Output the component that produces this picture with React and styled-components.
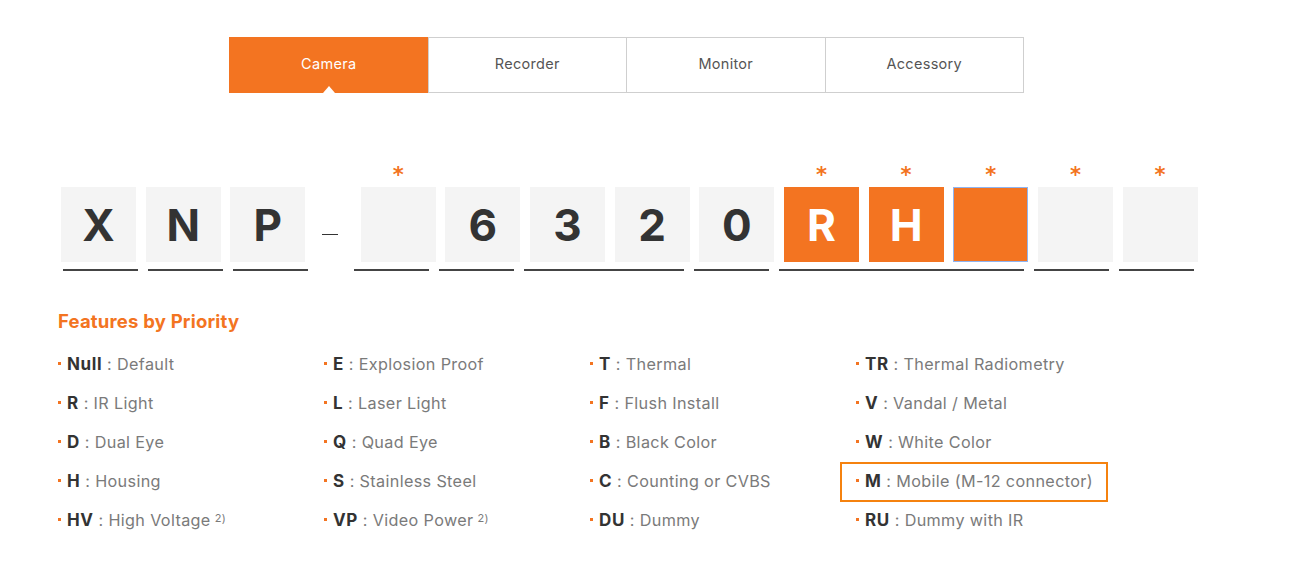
import React from "react";
import styled, { createGlobalStyle } from "styled-components";

const ORANGE = "#f37421";

const Global = createGlobalStyle`
  html, body { margin: 0; padding: 0; background: #fff; }
  body { font-family: Inter, "Noto Sans", sans-serif; color: #333; }
`;

const Page = styled.div`
  width: 1294px;
  height: 571px;
  overflow: hidden;
  padding-top: 37px;
  box-sizing: border-box;
`;

const Tabs = styled.div`
  display: flex;
  margin-left: 229px;
  width: 795px;
  height: 56px;
  box-sizing: border-box;
  border: 1px solid #cfcfcf;
  border-left: none;
`;

const Tab = styled.div`
  position: relative;
  flex: 1;
  display: flex;
  align-items: center;
  justify-content: center;
  padding-bottom: 3px;
  font-size: 14.5px;
  letter-spacing: 0.3px;
  color: ${(p) => (p.$active ? "#fff" : "#555")};
  background: ${(p) => (p.$active ? ORANGE : "#fff")};
  border-left: 1px solid ${(p) => (p.$active ? ORANGE : "#cfcfcf")};
  margin-top: ${(p) => (p.$active ? "-1px" : "0")};
  margin-bottom: ${(p) => (p.$active ? "-1px" : "0")};
  &::after {
    content: "";
    display: ${(p) => (p.$active ? "block" : "none")};
    position: absolute;
    left: 50%;
    bottom: 0;
    transform: translateX(-50%);
    border-left: 6px solid transparent;
    border-right: 6px solid transparent;
    border-bottom: 7px solid #fff;
  }
`;

const CodeRow = styled.div`
  display: flex;
  align-items: flex-end;
  margin-top: 75px;
  margin-left: 61px;
  gap: 9.67px;
`;

const Slot = styled.div`
  display: flex;
  flex-direction: column;
  align-items: center;
`;

const Star = styled.div`
  height: 19px;
  font-size: 21px;
  line-height: 15px;
  color: ${ORANGE};
  font-weight: 700;
  font-family: "DejaVu Sans", sans-serif;
`;

const Box = styled.div`
  width: 75px;
  height: 75px;
  box-sizing: border-box;
  display: flex;
  align-items: center;
  justify-content: center;
  font-size: 44px;
  font-weight: 700;
  color: ${(p) => (p.$on ? "#fff" : "#333")};
  background: ${(p) => (p.$on ? ORANGE : "#f4f4f4")};
  border: ${(p) => (p.$focus ? "1px solid #8fb4f0" : "none")};
`;

const Dash = styled.div`
  width: 16px;
  height: 1px;
  background: #333;
  margin: 0 13px 27px 7px;
`;

const LineRow = styled.div`
  display: flex;
  margin-top: 7px;
  margin-left: 63px;
`;

const Line = styled.div`
  height: 2px;
  background: #444;
  width: ${(p) => p.$w}px;
  margin-right: ${(p) => p.$gap}px;
`;

const Title = styled.h2`
  margin: 39px 0 0 58px;
  font-size: 18.5px;
  font-weight: 700;
  letter-spacing: 0.2px;
  color: ${ORANGE};
  line-height: 22px;
`;

const Grid = styled.div`
  display: grid;
  grid-template-columns: repeat(4, 266px);
  grid-auto-flow: column;
  grid-template-rows: repeat(5, 39px);
  margin: 12px 0 0 56px;
`;

const Item = styled.div`
  position: relative;
  display: flex;
  align-items: center;
  height: 39px;
  font-size: 16.2px;
  letter-spacing: 0.35px;
  color: #7a7a7a;
  white-space: pre;
  &::before {
    content: "";
    width: 3px;
    height: 3px;
    background: ${ORANGE};
    margin: 0 6px 0 2px;
  }
  &::after {
    content: "";
    display: ${(p) => (p.$mark ? "block" : "none")};
    position: absolute;
    left: -14px;
    width: 268px;
    top: 1px;
    height: 40px;
    border: 2px solid #f5820f;
    box-sizing: border-box;
  }
`;

const Key = styled.b`
  font-weight: 700;
  color: #333;
  font-size: 17px;
  letter-spacing: 0.6px;
`;

const Sup = styled.sup`
  font-size: 11px;
  margin-left: 4px;
  position: relative;
  top: -2px;
`;

const tabs = ["Camera", "Recorder", "Monitor", "Accessory"];

const slots = [
  { c: "X" }, { c: "N" }, { c: "P" }, { dash: true },
  { c: "", star: true }, { c: "6" }, { c: "3" }, { c: "2" }, { c: "0" },
  { c: "R", star: true, on: true }, { c: "H", star: true, on: true },
  { c: "", star: true, on: true, focus: true },
  { c: "", star: true }, { c: "", star: true },
];

const lines = [
  [75, 10], [75, 10], [75, 46], [75, 10], [75, 10], [160, 10],
  [75, 10], [245, 10], [75, 10], [75, 0],
];

const columns = [
  [["Null", "Default"], ["R", "IR Light"], ["D", "Dual Eye"], ["H", "Housing"], ["HV", "High Voltage", true]],
  [["E", "Explosion Proof"], ["L", "Laser Light"], ["Q", "Quad Eye"], ["S", "Stainless Steel"], ["VP", "Video Power", true]],
  [["T", "Thermal"], ["F", "Flush Install"], ["B", "Black Color"], ["C", "Counting or CVBS"], ["DU", "Dummy"]],
  [["TR", "Thermal Radiometry"], ["V", "Vandal / Metal"], ["W", "White Color"], ["M", "Mobile (M-12 connector)", false, true], ["RU", "Dummy with IR"]],
];

export default function App() {
  return (
    <Page>
      <Global />
      <Tabs>
        {tabs.map((t, i) => (
          <Tab key={t} $active={i === 0}>{t}</Tab>
        ))}
      </Tabs>
      <CodeRow>
        {slots.map((s, i) =>
          s.dash ? (
            <Dash key={i} />
          ) : (
            <Slot key={i}>
              <Star>{s.star ? "*" : ""}</Star>
              <Box $on={s.on} $focus={s.focus}>{s.c}</Box>
            </Slot>
          )
        )}
      </CodeRow>
      <LineRow>
        {lines.map(([w, g], i) => (
          <Line key={i} $w={w} $gap={g} />
        ))}
      </LineRow>
      <Title>Features by Priority</Title>
      <Grid>
        {columns.flatMap((col, ci) =>
          col.map(([k, d, sup, mark], ri) => (
            <Item key={ci + "-" + ri} $mark={mark}>
              <Key>{k}</Key>{" : " + d}
              {sup && <Sup>2)</Sup>}
            </Item>
          ))
        )}
      </Grid>
    </Page>
  );
}
